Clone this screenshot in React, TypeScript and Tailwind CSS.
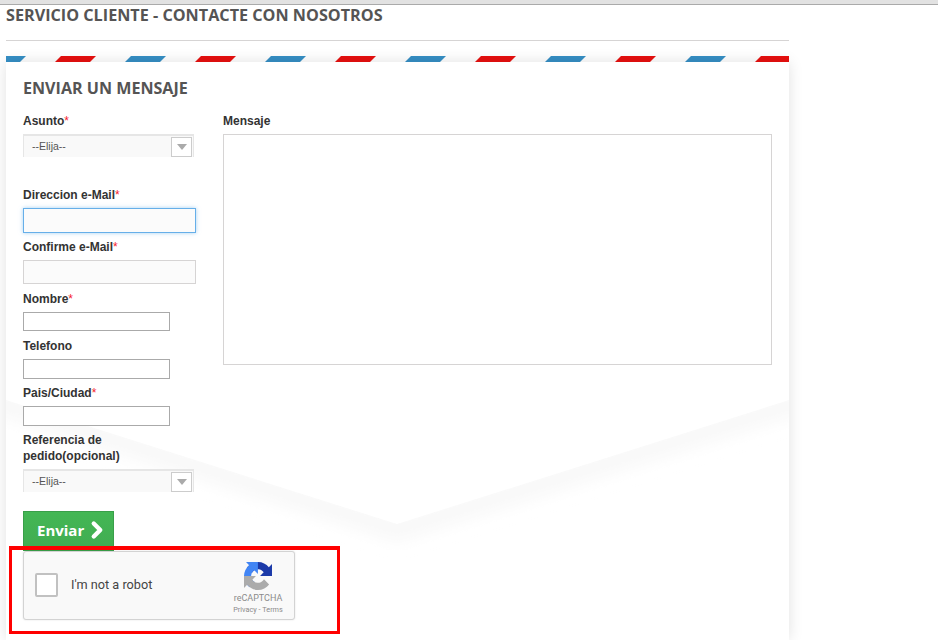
import React from "react";
import { ChevronRight } from "lucide-react";

const stripes = ["#368fc5", "#e8100f", "#368fc5", "#e8100f", "#368fc5", "#e8100f", "#368fc5", "#e8100f", "#368fc5", "#e8100f", "#368fc5", "#e8100f"];

const Label: React.FC<{ text: string; required?: boolean; className?: string }> = ({ text, required, className }) => (
  <label className={`block text-[12px] leading-[16px] font-bold text-[#333] ${className ?? ""}`}>
    {text}
    {required && <span className="font-normal text-[#f5222d]">*</span>}
  </label>
);

const FakeSelect: React.FC<{ className?: string }> = ({ className }) => (
  <div className={`flex h-[23px] w-[171px] items-center justify-between border-t-2 border-r border-l border-[#e6e6e6] bg-[#f9f9f9] pr-px pl-2 ${className ?? ""}`}>
    <span className="text-[10.5px] text-[#555] font-['Liberation_Sans',sans-serif]">--Elija--</span>
    <span className="flex h-[20px] w-[21px] items-center justify-center border border-[#ccc] bg-white">
      <span className="h-0 w-0 border-t-[6px] border-r-[5px] border-l-[5px] border-t-[#aaa] border-r-transparent border-l-transparent" />
    </span>
  </div>
);

const EnvelopeBg = () => (
  <svg className="absolute top-0 left-0 h-full w-full" viewBox="0 0 783 578" preserveAspectRatio="none">
    <defs>
      <filter id="flap" x="-5%" y="-20%" width="110%" height="140%">
        <feGaussianBlur stdDeviation="8" />
      </filter>
    </defs>
    <path d="M-40 325 L391 462 L823 325" fill="none" stroke="#f8f8f8" strokeWidth="22" filter="url(#flap)" transform="translate(0 6)" />
    <path d="M0 0 H783 V338 L391 462 L0 338 Z" fill="#fff" />
  </svg>
);

const RecaptchaLogo = () => (
  <svg width="28" height="28" viewBox="0 0 64 64">
    <path fill="#1c3aa9" d="M64 31.955l-.033-1.37V4.687l-7.16 7.16C50.948 4.674 42.033.093 32.05.093c-10.4 0-19.622 4.96-25.458 12.64l11.736 11.86a15.55 15.55 0 0 1 4.754-5.334c2.05-1.6 4.952-2.906 8.968-2.906.485 0 .86.057 1.135.163 4.976.393 9.288 3.14 11.828 7.124l-8.307 8.307 32.294.01" />
    <path fill="#4285f4" d="M31.862.094l-1.37.033H4.594l7.16 7.16C4.58 13.147 0 22.06 0 32.046c0 10.4 4.96 19.622 12.64 25.458l11.86-11.736a15.55 15.55 0 0 1-5.334-4.754c-1.6-2.05-2.906-4.952-2.906-8.968 0-.485.057-.86.163-1.135.393-4.976 3.14-9.288 7.124-11.828l8.307 8.307L31.862.094" />
    <path fill="#ababab" d="M.001 32.045l.033 1.37v25.898l7.16-7.16c5.86 7.173 14.774 11.754 24.76 11.754 10.4 0 19.622-4.96 25.458-12.64l-11.736-11.86a15.55 15.55 0 0 1-4.754 5.334c-2.05 1.6-4.952 2.906-8.968 2.906-.485 0-.86-.057-1.135-.163-4.976-.393-9.288-3.14-11.828-7.124l8.307-8.307-32.294-.01" />
  </svg>
);

export default function App() {
  return (
    <div className="relative h-[640px] w-[938px] overflow-hidden bg-white font-['Liberation_Sans',sans-serif]">
      <div className="h-[5px] border-b border-[#aaa] bg-[#e2e2e2]" />

      <div className="mx-[6px] w-[783px]">
        <h1 className="h-[36px] border-b border-[#d6d4d4] font-['Open_Sans',sans-serif] text-[16.2px] leading-[20px] font-bold text-[#555454] uppercase">
          Servicio cliente - contacte con nosotros
        </h1>

        <div className="mt-[15px] flex h-[6px] overflow-hidden bg-white">
          <div className="-ml-[18px] flex">
            {stripes.map((color, i) => (
              <span key={i} className="mr-[35px] h-[6px] w-[35px] shrink-0 -skew-x-45" style={{ backgroundColor: color }} />
            ))}
          </div>
        </div>

        <div className="relative h-[578px] shadow-[0_0_14px_rgba(0,0,0,0.12)]">
          <EnvelopeBg />
          <div className="relative px-[17px] pt-[15px]">
            <h3 className="font-['Open_Sans',sans-serif] text-[16.1px] leading-[22px] font-bold text-[#555454] uppercase">
              Enviar un mensaje
            </h3>
            <div className="mt-[6px] flex">
              <div className="w-[200px] shrink-0 pt-[8px]">
                <Label text="Asunto" required />
                <FakeSelect className="mt-[5px]" />

                <Label text="Direccion e-Mail" required className="mt-[30px]" />
                <input className="mt-[5px] block h-[25px] w-[173px] border border-[#66afe9] bg-[#fbfbfb] shadow-[0_0_4px_rgba(102,175,233,0.6)] outline-none" />

                <Label text="Confirme e-Mail" required className="mt-[6px]" />
                <input className="mt-[5px] block h-[24px] w-[173px] border border-[#d6d4d4] bg-[#fbfbfb]" />

                <Label text="Nombre" required className="mt-[7px]" />
                <input className="mt-[5px] block h-[19px] w-[147px] border border-[#aaa] bg-white" />

                <Label text="Telefono" className="mt-[7px]" />
                <input className="mt-[5px] block h-[20px] w-[147px] border border-[#aaa] bg-white" />

                <Label text="Pais/Ciudad" required className="mt-[6px]" />
                <input className="mt-[5px] block h-[20px] w-[147px] border border-[#aaa] bg-white" />

                <Label text="Referencia de pedido(opcional)" className="mt-[6px] w-[150px]" />
                <FakeSelect className="mt-[5px]" />

                <button className="mt-[19px] flex h-[40px] w-[91px] items-center border border-[#399f49] bg-linear-to-b from-[#43b754] to-[#42ac52] pb-[2px] pl-[13px] font-['Open_Sans',sans-serif] text-[15px] font-bold text-white">
                  Enviar
                  <ChevronRight size={26} strokeWidth={4} />
                </button>

                <div className="flex h-[69px] w-[272px] items-center justify-between rounded-[3px] border border-[#d3d3d3] bg-[#f9f9f9] pr-[11px] pl-[11px] shadow-[0_0_2px_rgba(0,0,0,0.12)]">
                  <div className="flex items-center gap-[13px] pb-[2px]">
                    <span className="h-[24px] w-[23px] rounded-[2px] border-2 border-[#c1c1c1] bg-white" />
                    <span className="font-['Roboto',sans-serif] text-[12.7px] whitespace-nowrap text-[#444]">I'm not a robot</span>
                  </div>
                  <div className="flex w-[50px] flex-col items-center pt-[6px] font-['Roboto',sans-serif] text-[#8b8b8b]">
                    <RecaptchaLogo />
                    <span className="mt-[2px] text-[9px] leading-[12px]">reCAPTCHA</span>
                    <span className="text-[7.3px] leading-[12px] whitespace-nowrap">Privacy - Terms</span>
                  </div>
                </div>
              </div>

              <div className="pt-[8px]">
                <Label text="Mensaje" />
                <textarea className="mt-[5px] block h-[231px] w-[549px] resize-none border border-[#d6d4d4] bg-white" />
              </div>
            </div>
          </div>
        </div>
      </div>

      {/* red annotation round the captcha */}
      <div className="pointer-events-none absolute top-[546px] left-[9px] h-[88px] w-[331px] border-[3px] border-t-4 border-[#f00]" />
    </div>
  );
}
